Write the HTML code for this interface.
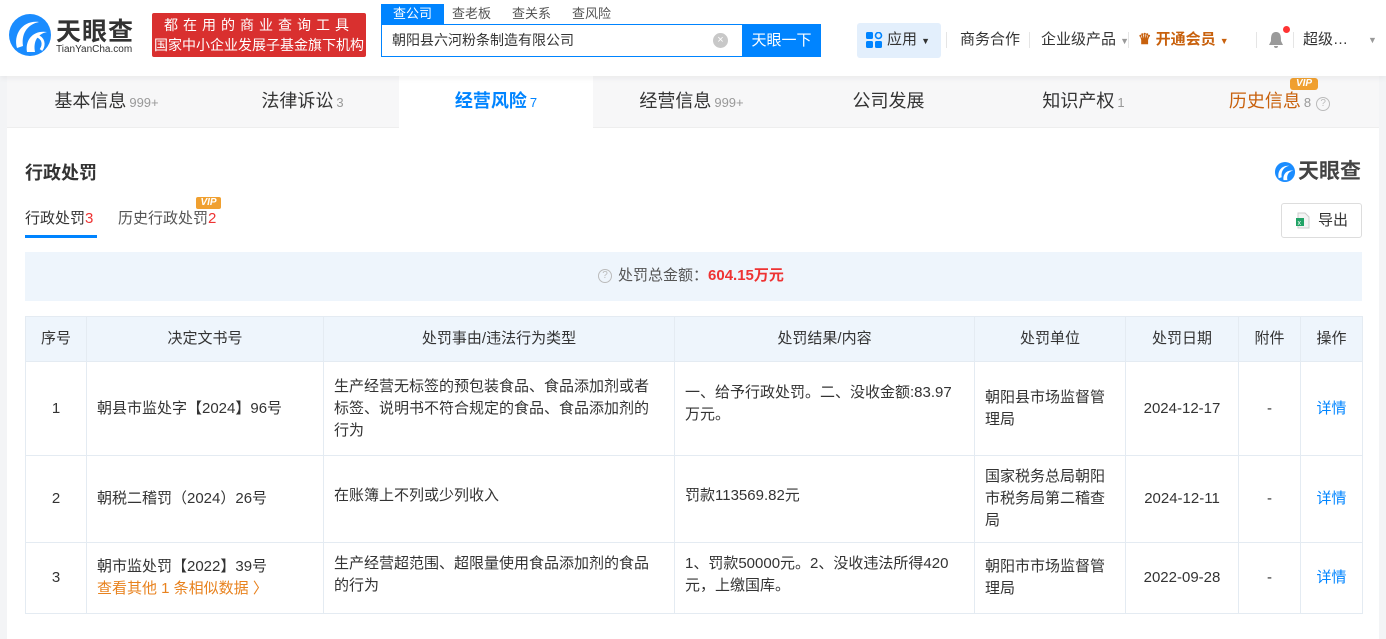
<!DOCTYPE html>
<html><head><meta charset="utf-8">
<style>
*{margin:0;padding:0;box-sizing:border-box}
body{width:1386px;height:639px;overflow:hidden;background:#f3f4f6;font-family:"Liberation Sans","Noto Sans CJK SC",sans-serif;color:#333;position:relative;font-size:14px}
.a{position:absolute;white-space:nowrap}
#hdr{position:absolute;left:0;top:0;width:1386px;height:76px;background:#fff;box-shadow:0 2px 6px rgba(0,0,0,.06);z-index:2}
#card{position:absolute;left:7px;top:76px;width:1372px;height:563px;background:#fff}
#tabs{position:absolute;left:7px;top:76px;width:1372px;height:52px;background:#f7f7f8;border-bottom:1px solid #eee}
.tab{position:absolute;top:76px;height:52px;line-height:50px;font-size:18px;color:#333;text-align:center}
.tab small{font-size:13px;color:#999;margin-left:3px}
table{position:absolute;left:25px;top:316px;width:1337px;border-collapse:collapse;font-size:15px;table-layout:fixed}
td,th{border:1px solid #e4ebf2;padding:0 10px;vertical-align:middle;line-height:22px;font-weight:normal;color:#333}
th{background:#eef5fc;height:45px;text-align:center}
td.c{text-align:center}
td.w{padding-right:16px}
.blue{color:#0084ff}
</style></head><body>
<div id="hdr">
 <svg class="a" style="left:7px;top:12px" width="46" height="46" viewBox="0 0 46 46">
  <circle cx="23" cy="23" r="21" fill="#1a8cff"/>
  <path d="M10 36 C6 22 16 8 32 10 C22 12 14 20 16 34 Z" fill="#fff"/>
  <path d="M20 40 C18 28 26 18 40 20 C30 22 26 30 28 40 Z" fill="#fff"/>
  <path d="M30 24 C36 26 38 32 34 38" stroke="#fff" stroke-width="3" fill="none"/>
 </svg>
 <div class="a" style="left:56px;top:12px;font-size:25px;font-weight:bold;color:#333;letter-spacing:1px">天眼查</div>
 <div class="a" style="left:56px;top:44px;font-size:10px;color:#333">TianYanCha.com</div>
 <div class="a" style="left:152px;top:13px;width:214px;height:44px;background:#d9302f;border-radius:2px;color:#fff;font-size:14px;text-align:center;line-height:20px;padding-top:2px"><span style="letter-spacing:5px">都在用的商业查询工具</span><br>国家中小企业发展子基金旗下机构</div>
 <div class="a" style="left:381px;top:4px;width:63px;height:20px;background:#0084ff;color:#fff;text-align:center;line-height:20px;font-size:13px">查公司</div>
 <div class="a" style="left:452px;top:4px;font-size:13px;color:#555;line-height:20px">查老板</div>
 <div class="a" style="left:512px;top:4px;font-size:13px;color:#555;line-height:20px">查关系</div>
 <div class="a" style="left:572px;top:4px;font-size:13px;color:#555;line-height:20px">查风险</div>
 <div class="a" style="left:381px;top:24px;width:440px;height:33px;border:1px solid #0084ff;background:#fff"></div>
 <div class="a" style="left:392px;top:24px;line-height:33px;font-size:14px;color:#333">朝阳县六河粉条制造有限公司</div>
 <div class="a" style="left:713px;top:33px;width:15px;height:15px;border-radius:50%;background:#c8c8c8;color:#fff;font-size:11px;line-height:15px;text-align:center">×</div>
 <div class="a" style="left:742px;top:24px;width:79px;height:33px;background:#0084ff;color:#fff;text-align:center;line-height:33px;font-size:15px">天眼一下</div>
 <div class="a" style="left:857px;top:23px;width:84px;height:35px;background:#e3effc;border-radius:3px"></div>
 <svg class="a" style="left:866px;top:32px" width="17" height="17"><rect x="0" y="0" width="7" height="7" rx="1.5" fill="#0084ff"/><rect x="0" y="9" width="7" height="7" rx="1.5" fill="#0084ff"/><rect x="9" y="9" width="7" height="7" rx="1.5" fill="#0084ff"/><circle cx="12.5" cy="3.5" r="3" fill="none" stroke="#0084ff" stroke-width="1.6"/></svg>
 <div class="a" style="left:887px;top:30px;font-size:15px;line-height:20px">应用 <span style="font-size:9px">▼</span></div>
 <div class="a" style="left:946px;top:32px;width:1px;height:16px;background:#e5e5e5"></div>
 <div class="a" style="left:960px;top:30px;font-size:15px;line-height:20px">商务合作</div>
 <div class="a" style="left:1029px;top:32px;width:1px;height:16px;background:#e5e5e5"></div>
 <div class="a" style="left:1041px;top:30px;font-size:15px;line-height:20px">企业级产品 <span style="font-size:9px;color:#999">▼</span></div>
 <div class="a" style="left:1128px;top:32px;width:1px;height:16px;background:#e5e5e5"></div>
 <div class="a" style="left:1138px;top:30px;font-size:15px;line-height:20px;color:#c8610d;font-weight:bold">♛ 开通会员 <span style="font-size:9px">▼</span></div>
 <div class="a" style="left:1256px;top:32px;width:1px;height:16px;background:#e5e5e5"></div>
 <svg class="a" style="left:1267px;top:30px" width="18" height="20"><path d="M9 2 C4 2 4 7 4 11 L2 15 L16 15 L14 11 C14 7 14 2 9 2Z M7 16 A2 2 0 0 0 11 16Z" fill="#9a9a9a"/></svg>
 <div class="a" style="left:1283px;top:26px;width:7px;height:7px;border-radius:50%;background:#f33"></div>
 <div class="a" style="left:1293px;top:32px;width:1px;height:16px;background:#e5e5e5"></div>
 <div class="a" style="left:1303px;top:30px;font-size:15px;line-height:20px">超级…</div>
 <div class="a" style="left:1368px;top:35px;font-size:9px;color:#999">▼</div>
</div>
<div id="card"></div>
<div id="tabs"></div>
<div class="a" style="left:399px;top:76px;width:194px;height:53px;background:#fff"></div>
<div class="tab" style="left:7px;width:199px">基本信息<small>999+</small></div>
<div class="tab" style="left:206px;width:193px">法律诉讼<small>3</small></div>
<div class="tab" style="left:399px;width:194px;color:#0084ff;font-weight:bold">经营风险<small style="color:#0084ff;font-weight:normal">7</small></div>
<div class="tab" style="left:593px;width:197px">经营信息<small>999+</small></div>
<div class="tab" style="left:790px;width:197px">公司发展</div>
<div class="tab" style="left:987px;width:193px">知识产权<small>1</small></div>
<div class="tab" style="left:1180px;width:199px;color:#c8610d">历史信息<small>8</small> <span style="display:inline-block;width:14px;height:14px;border:1px solid #bbb;border-radius:50%;font-size:10px;line-height:12px;color:#bbb;vertical-align:1px">?</span></div>
<div class="a" style="left:1290px;top:78px;width:28px;height:12px;background:#f0a030;border-radius:3px;color:#fff;font-size:10px;font-weight:bold;font-style:italic;line-height:12px;text-align:center">VIP</div>

<div class="a" style="left:25px;top:161px;font-size:18px;font-weight:bold;line-height:24px">行政处罚</div>
<svg class="a" style="left:1274px;top:161px" width="22" height="22" viewBox="0 0 46 46"><circle cx="23" cy="23" r="21" fill="#1a8cff"/><path d="M10 36 C6 22 16 8 32 10 C22 12 14 20 16 34 Z" fill="#fff"/><path d="M20 40 C18 28 26 18 40 20 C30 22 26 30 28 40 Z" fill="#fff"/></svg>
<div class="a" style="left:1298px;top:159px;font-size:21px;font-weight:bold;color:#444;line-height:26px">天眼查</div>

<div class="a" style="left:25px;top:209px;font-size:15px;line-height:20px">行政处罚<span style="color:#e33">3</span></div>
<div class="a" style="left:25px;top:235px;width:72px;height:3px;background:#0084ff"></div>
<div class="a" style="left:118px;top:209px;font-size:15px;line-height:20px;color:#555">历史行政处罚<span style="color:#e33">2</span></div>
<div class="a" style="left:196px;top:197px;width:25px;height:12px;background:#f0a030;border-radius:2px;color:#fff;font-size:10px;font-weight:bold;font-style:italic;line-height:12px;text-align:center">VIP</div>
<div class="a" style="left:1281px;top:203px;width:81px;height:35px;border:1px solid #ddd;border-radius:3px;background:#fff"></div>
<svg class="a" style="left:1296px;top:212px" width="14" height="17"><path d="M2 1 L9 1 L13 5 L13 16 L2 16Z" fill="#f4f4f4" stroke="#ccc"/><rect x="0" y="6" width="8" height="8" fill="#21a366"/><text x="1.5" y="13" font-size="7" fill="#fff" font-family="Liberation Sans">x</text></svg>
<div class="a" style="left:1318px;top:211px;font-size:15px;line-height:20px">导出</div>

<div class="a" style="left:25px;top:252px;width:1337px;height:49px;background:#eef5fc"></div>
<div class="a" style="left:598px;top:269px;width:14px;height:14px;border:1px solid #bbb;border-radius:50%;font-size:10px;line-height:12px;color:#bbb;text-align:center">?</div>
<div class="a" style="left:618px;top:266px;font-size:15px;line-height:20px;color:#555">处罚总金额：<span style="color:#e33;font-weight:bold">604.15万元</span></div>

<table>
<colgroup><col style="width:61px"><col style="width:237px"><col style="width:351px"><col style="width:300px"><col style="width:151px"><col style="width:113px"><col style="width:62px"><col style="width:62px"></colgroup>
<tr><th>序号</th><th>决定文书号</th><th>处罚事由/违法行为类型</th><th>处罚结果/内容</th><th>处罚单位</th><th>处罚日期</th><th>附件</th><th>操作</th></tr>
<tr style="height:94px"><td class="c">1</td><td>朝县市监处字【2024】96号</td><td class="w">生产经营无标签的预包装食品、食品添加剂或者标签、说明书不符合规定的食品、食品添加剂的行为</td><td class="w" style="vertical-align:top;padding-top:20px">一、给予行政处罚。二、没收金额:83.97万元。</td><td style="padding-right:14px">朝阳县市场监督管理局</td><td class="c">2024-12-17</td><td class="c">-</td><td class="c blue">详情</td></tr>
<tr style="height:87px"><td class="c">2</td><td>朝税二稽罚（2024）26号</td><td style="vertical-align:top;padding-top:29px">在账簿上不列或少列收入</td><td style="vertical-align:top;padding-top:29px">罚款113569.82元</td><td style="padding-right:14px">国家税务总局朝阳市税务局第二稽查局</td><td class="c">2024-12-11</td><td class="c">-</td><td class="c blue">详情</td></tr>
<tr style="height:71px"><td class="c">3</td><td>朝市监处罚【2022】39号<br><span style="color:#e8821e">查看其他 1 条相似数据 〉</span></td><td class="w" style="vertical-align:top;padding-top:10px">生产经营超范围、超限量使用食品添加剂的食品的行为</td><td class="w" style="vertical-align:top;padding-top:10px">1、罚款50000元。2、没收违法所得420元，上缴国库。</td><td style="padding-right:14px">朝阳市市场监督管理局</td><td class="c">2022-09-28</td><td class="c">-</td><td class="c blue">详情</td></tr>
</table>
</body></html>
